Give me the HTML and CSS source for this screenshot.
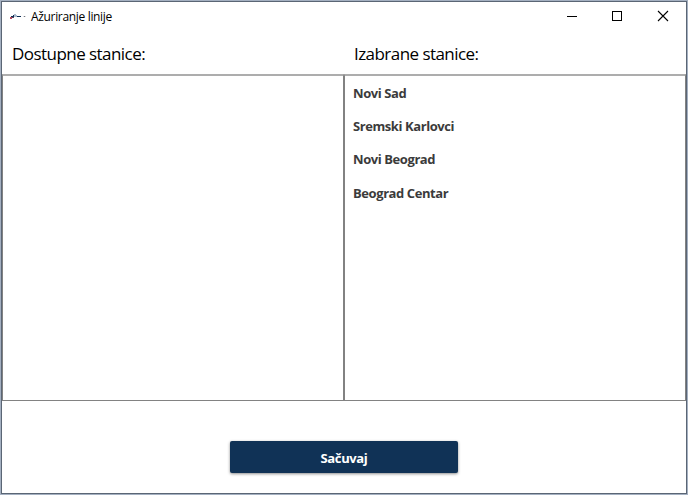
FILE: index.html
```html
<!DOCTYPE html>
<html lang="sr-Latn">
<head>
<meta charset="utf-8">
<title>Ažuriranje linije</title>
<link rel="stylesheet" href="styles.css">
</head>
<body>
<div class="window">
  <header class="titlebar">
    <svg class="app-icon" width="16" height="6" viewBox="0 0 16 6" shape-rendering="crispEdges">
      <path fill="#a9b9cc" d="M4 0h2v1h1v2h-3z"/>
      <path fill="#102f55" d="M1 2h3v1h-3zM3 1h1v1h-1zM7 2h4v1h-4z"/>
      <path fill="#b3475c" d="M0 3h2v2h-2z"/>
      <path fill="#5a4058" d="M2 3h2v1h-2z"/>
      <path fill="#dadde1" d="M13 2h3v1h-3z"/>
      <path fill="#77757a" d="M14 2h1v1h-1z"/>
    </svg>
    <h1 class="title">Ažuriranje linije</h1>
    <div class="controls">
      <svg width="46" height="28" viewBox="0 0 46 28" shape-rendering="crispEdges"><path fill="#000" d="M19 13h10v1h-10z"/></svg>
      <svg width="46" height="28" viewBox="0 0 46 28" shape-rendering="crispEdges"><path fill="#000" fill-rule="evenodd" d="M18 8h10v10h-10zM19 9v8h8v-8z"/></svg>
      <svg width="46" height="28" viewBox="0 0 46 28"><path fill="none" stroke="#000" stroke-width="1.1" d="M18 8l10 10M28 8l-10 10"/></svg>
    </div>
  </header>
  <main class="columns">
    <section class="column">
      <h2 class="heading">Dostupne stanice:</h2>
      <ul class="list"></ul>
    </section>
    <section class="column">
      <h2 class="heading">Izabrane stanice:</h2>
      <ul class="list">
        <li>Novi Sad</li>
        <li>Sremski Karlovci</li>
        <li>Novi Beograd</li>
        <li>Beograd Centar</li>
      </ul>
    </section>
  </main>
  <footer class="footer"><button class="save">Sačuvaj</button></footer>
</div>
</body>
</html>
```
FILE: styles.css
```css
* { box-sizing: border-box; }
body {
  margin: 0;
  height: 495px;
  border: 1px solid #a4b0c1;
  background: #fff;
  color: #000;
  font-family: "Open Sans", "Noto Sans", sans-serif;
  overflow: hidden;
}
.window {
  height: 493px;
  border: 1px solid #5b6675;
  display: flex;
  flex-direction: column;
}
.titlebar {
  height: 30px;
  display: flex;
  align-items: center;
  padding-left: 8px;
}
.app-icon { margin-right: 5px; }
.title {
  margin: 0;
  padding-bottom: 2px;
  font-size: 12px;
  font-weight: 400;
  letter-spacing: -0.33px;
}
.controls { display: flex; margin-left: auto; }
.columns { display: flex; height: 369px; }
.column { flex: 1; display: flex; flex-direction: column; }
.heading {
  margin: 0;
  height: 42px;
  padding-left: 10px;
  font-size: 17px;
  line-height: 43px;
  font-weight: 400;
  letter-spacing: -0.55px;
}
.list {
  flex: 1;
  margin: 0;
  padding: 1px 8px;
  border: 1px solid #828282;
  border-top: 2px solid #adadad;
  list-style: none;
}
.list li {
  height: 33.2px;
  line-height: 33.2px;
  font-size: 13px;
  font-weight: 700;
  letter-spacing: -0.42px;
  color: #3b3b3b;
}
.footer { padding-top: 40px; display: flex; justify-content: center; }
.save {
  width: 228px;
  height: 32px;
  padding: 1px 0 0;
  border: 0;
  border-radius: 2px;
  background: #103256;
  box-shadow: 0 1px 3px rgba(0, 0, 0, .45);
  color: #fff;
  font: 700 13px "Open Sans", "Noto Sans", sans-serif;
  letter-spacing: -0.35px;
}
```
